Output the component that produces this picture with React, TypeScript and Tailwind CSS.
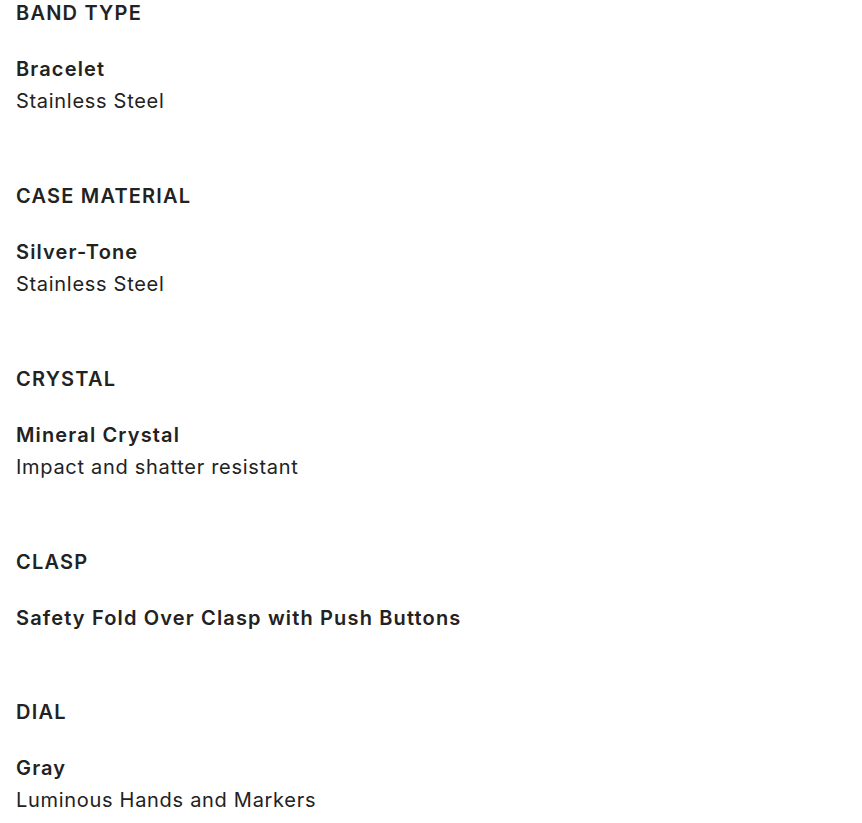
import React from "react";

const specs = [
  { title: "BAND TYPE", name: "Bracelet", desc: "Stainless Steel" },
  { title: "CASE MATERIAL", name: "Silver-Tone", desc: "Stainless Steel" },
  { title: "CRYSTAL", name: "Mineral Crystal", desc: "Impact and shatter resistant" },
  { title: "CLASP", name: "Safety Fold Over Clasp with Push Buttons", desc: "" },
  { title: "DIAL", name: "Gray", desc: "Luminous Hands and Markers" },
];

export default function App() {
  return (
    <div
      className="bg-white min-h-screen px-4 text-[#222222]"
      style={{ fontFamily: "Inter, 'Noto Sans', sans-serif" }}
    >
      {specs.map((s) => (
        <section key={s.title} className={s.desc ? "mb-[66px]" : "mb-[65px]"}>
          <h3 className="text-[20px] leading-[26px] font-semibold tracking-[1.2px]">{s.title}</h3>
          <div className="mt-[27px]">
            <p className="text-[20px] leading-8 font-semibold tracking-[1.15px]">{s.name}</p>
            {s.desc && <p className="text-[20px] leading-8 font-normal tracking-[0.7px]">{s.desc}</p>}
          </div>
        </section>
      ))}
    </div>
  );
}
